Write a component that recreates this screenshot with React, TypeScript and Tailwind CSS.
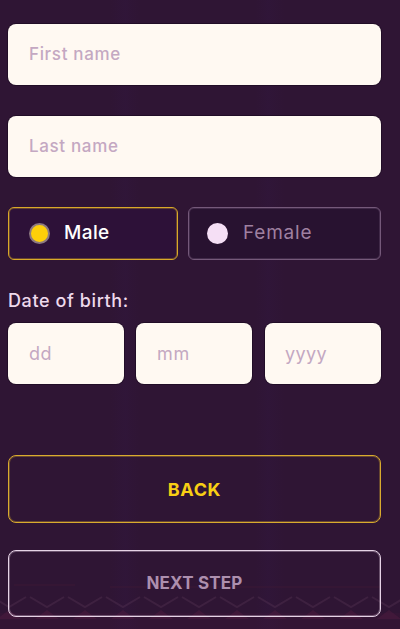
import React from 'react';

const font = "font-['Inter','Liberation_Sans',sans-serif]";

function TextField({ placeholder, className }: { placeholder: string; className: string }) {
  return (
    <div className={`flex items-center bg-[#fff9f2] rounded-lg ring-1 ring-[#14061a]/50 text-[#c4a8c2] ${className}`}>
      {placeholder}
    </div>
  );
}

// zigzag weave along the bottom edge of the background
function BottomPattern() {
  const xs = Array.from({ length: 11 }, (_, i) => i * 38 - 8);
  return (
    <svg className="absolute left-0 bottom-0 w-[400px] h-[50px] pointer-events-none" viewBox="0 0 400 50" fill="none">
      <path d="M0 34H400V50H0Z" fill="#4a1a3c" opacity="0.2" />
      <path d="M14 6H75M110 8H380" stroke="#5a2038" strokeWidth="1" opacity="0.3" />
      {xs.map((x) => (
        <g key={x}>
          <path d={`M${x} 18L${x + 17} 28L${x + 34} 18`} stroke="#5d3a58" strokeWidth="2" opacity="0.35" />
          <path d={`M${x + 5} 40L${x + 17} 31L${x + 29} 40Z`} fill="#5c1f45" opacity="0.35" />
        </g>
      ))}
    </svg>
  );
}

export default function App() {
  return (
    <div className={`relative w-[400px] h-[629px] overflow-hidden bg-[#2f1534] ${font}`}>
      {/* faint vertical bands of the background */}
      <div className="absolute inset-0 bg-[linear-gradient(90deg,transparent_110px,#33184a33_125px,transparent_140px,transparent_255px,#33184a33_268px,transparent_285px)]" />
      <BottomPattern />
      <div className="relative flex flex-col w-[373px] ml-2 pt-6">
        <TextField placeholder="First name" className="h-[61px] pl-[21px] text-[17px] font-medium tracking-[0.65px]" />
        <TextField placeholder="Last name" className="h-[61px] mt-[31px] pl-[21px] text-[17px] font-medium tracking-[0.65px]" />

        <div className="flex gap-[10px] mt-[30px]">
          <div className="flex items-center w-[170px] h-[53px] rounded-md border border-[#d9a928] shadow-[inset_0_0_0_1px_#d9a92855] bg-[#2d1138] pl-5">
            <span className="w-[21px] h-[21px] rounded-full bg-[#fdcf0a] border-2 border-[#8d7a80]" />
            <span className="ml-[14px] text-white text-[19px] font-medium tracking-[0.4px]">Male</span>
          </div>
          <div className="flex items-center flex-1 h-[53px] rounded-md border border-[#75597a] shadow-[inset_0_0_0_1px_#75597a55] bg-[#281230] pl-[18px]">
            <span className="w-[21px] h-[21px] rounded-full bg-[#f5dff5]" />
            <span className="ml-[15px] text-[#9f80a0] text-[19px] tracking-[0.8px]">Female</span>
          </div>
        </div>

        <div className="mt-[30px] text-[#eed9ec] text-[18px] font-medium leading-[22px] tracking-[0.6px]">Date of birth:</div>

        <div className="flex mt-[11px]">
          <TextField placeholder="dd" className="w-[116px] h-[61px] pl-[21px] text-[18px] tracking-[0.4px]" />
          <TextField placeholder="mm" className="w-[116px] h-[61px] ml-3 pl-[21px] text-[18px] tracking-[0.8px]" />
          <TextField placeholder="yyyy" className="w-[116px] h-[61px] ml-[13px] pl-[20px] text-[18px] tracking-[0.4px]" />
        </div>

        <div className="flex items-center justify-center h-[68px] mt-[71px] rounded-lg border border-[#d9ab2e] shadow-[inset_0_0_0_1px_#d9ab2e55] text-[#f8cf14] text-[18px] font-bold tracking-[0.6px]">
          BACK
        </div>
        <div className="flex items-center justify-center h-[67px] mt-[27px] rounded-lg border border-[#e6d3e6] shadow-[inset_0_0_0_1px_#e6d3e655] text-[#ad8fae] text-[17px] font-bold tracking-[0.2px]">
          NEXT STEP
        </div>
      </div>
    </div>
  );
}
